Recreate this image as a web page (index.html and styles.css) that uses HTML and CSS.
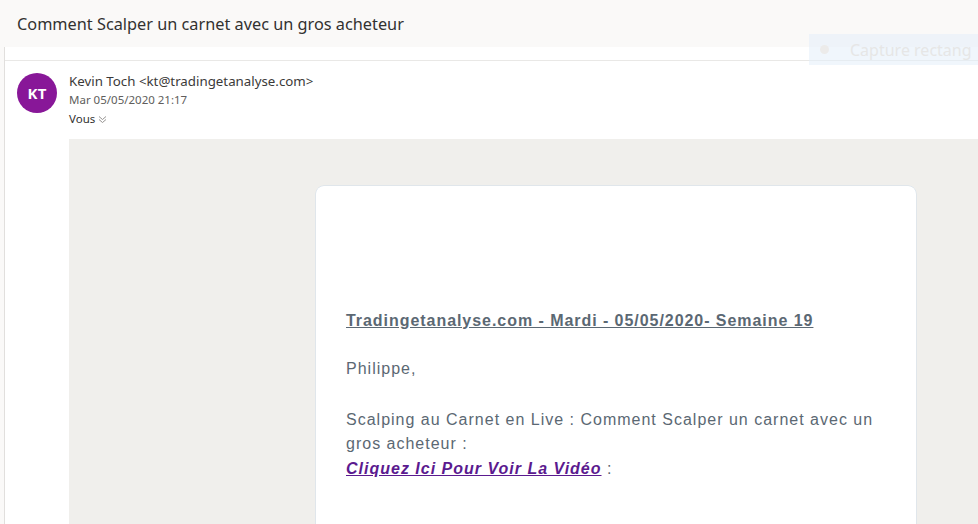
FILE: index.html
```html
<!DOCTYPE html>
<html lang="fr">
<head>
<meta charset="utf-8">
<title>Comment Scalper un carnet avec un gros acheteur</title>
<link rel="stylesheet" href="styles.css">
</head>
<body>
<div class="app">
  <header class="subject-bar">
    <h1 class="subject">Comment Scalper un carnet avec un gros acheteur</h1>
  </header>
  <div class="reading">
    <div class="gap-row"></div>
    <div class="message">
      <div class="avatar">KT</div>
      <div class="msg-main">
        <div class="from">Kevin Toch &lt;kt@tradingetanalyse.com&gt;</div>
        <div class="date">Mar 05/05/2020 21:17</div>
        <div class="to">Vous <svg class="chev" width="9" height="9" viewBox="0 0 9 9"><path d="M1 1.5 L4.5 4.5 L8 1.5 M1 4.5 L4.5 7.5 L8 4.5" fill="none" stroke="#8a8886" stroke-width="0.9"/></svg></div>
        <div class="body-area">
          <div class="card">
            <p class="headline"><a href="#">Tradingetanalyse.com - Mardi - 05/05/2020- Semaine 19</a></p>
            <p class="para">Philippe,</p>
            <p class="para">Scalping au Carnet en Live : Comment Scalper un carnet avec un gros acheteur :<br><a class="video" href="#">Cliquez Ici Pour Voir La Vidéo</a> :</p>
          </div>
        </div>
      </div>
    </div>
  </div>
  <div class="capture-ghost"><span class="dot"></span><span class="cap-text">Capture rectang</span></div>
</div>
</body>
</html>
```

FILE: styles.css
```css
html, body {
  margin: 0;
  padding: 0;
  background: #ffffff;
  overflow: hidden;
}
.app {
  position: relative;
  width: 978px;
  height: 524px;
  overflow: hidden;
  font-family: "Segoe UI", "Noto Sans", "Open Sans", sans-serif;
  background: #faf9f8;
}
.subject-bar {
  height: 47px;
  box-sizing: border-box;
  padding: 0 0 0 17px;
  display: flex;
  align-items: center;
}
.subject {
  margin: 0;
  font-size: 16.3px;
  font-weight: 400;
  color: #323130;
  letter-spacing: 0;
}
.reading {
  margin-left: 4px;
  background: #ffffff;
  border-left: 1px solid #e1dfdd;
  height: 477px;
}
.gap-row {
  height: 13px;
  border-bottom: 1px solid #e9e8e6;
}
.message {
  display: flex;
  padding: 12px 0 0 12px;
}
.avatar {
  flex: none;
  width: 40px;
  height: 40px;
  border-radius: 50%;
  background: #881798;
  color: #ffffff;
  font-weight: 700;
  font-size: 15px;
  display: flex;
  align-items: center;
  justify-content: center;
  letter-spacing: 0.2px;
}
.msg-main {
  flex: 1;
  padding-left: 12px;
}
.from {
  font-size: 13.3px;
  color: #3b3a39;
  line-height: 17px;
}
.date {
  font-size: 11.5px;
  color: #605e5c;
  line-height: 19px;
}
.to {
  font-size: 11.5px;
  color: #323130;
  line-height: 19px;
  display: flex;
  align-items: center;
  gap: 3px;
}
.chev { margin-top: 1px; }
.body-area {
  margin-top: 11px;
  background: #f0efec;
  height: 400px;
  padding: 47px 0 0 247px;
  box-sizing: border-box;
}
.card {
  width: 600px;
  height: 360px;
  background: #ffffff;
  border-radius: 8px;
  box-shadow: 0 0 0 0.5px rgba(150, 190, 230, 0.35);
  box-sizing: border-box;
  padding: 123px 30px 0 30px;
  font-family: "Liberation Sans", Arial, sans-serif;
  color: #5b6873;
  font-size: 16px;
  letter-spacing: 1px;
}
.headline {
  margin: 0 0 24px 0;
  font-weight: 700;
  line-height: 24px;
  letter-spacing: 0.95px;
}
.headline a {
  color: #5b6873;
  text-decoration: underline;
}
.para {
  margin: 0 0 26px 0;
  line-height: 24.5px;
}
.video {
  color: #5b1a8f;
  font-weight: 700;
  font-style: italic;
  text-decoration: underline;
}
.capture-ghost {
  position: absolute;
  left: 809px;
  top: 34px;
  width: 169px;
  height: 31px;
  background: rgba(228, 238, 250, 0.55);
  display: flex;
  align-items: center;
  overflow: hidden;
  font-family: "Segoe UI", "Noto Sans", sans-serif;
  font-size: 16px;
  color: #e6e6e6;
}
.capture-ghost .dot {
  flex: none;
  width: 9px;
  height: 9px;
  border-radius: 50%;
  background: #ecebea;
  margin: 0 21px 0 11px;
}
.cap-text { white-space: nowrap; }
```
